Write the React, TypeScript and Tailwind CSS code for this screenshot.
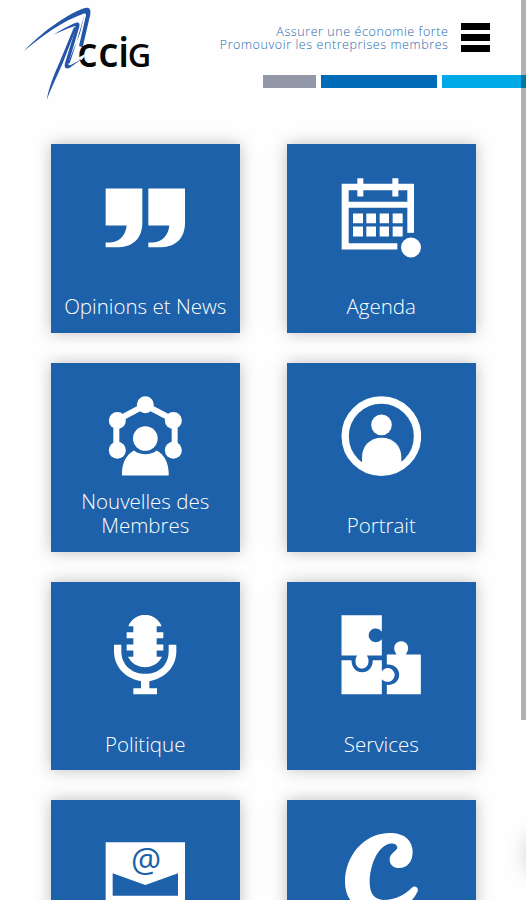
import type { ReactNode } from "react";

const BLUE = "#1c61a9";

function Logo() {
  return (
    <svg className="h-[110px] w-[160px]" viewBox="0 0 480 330" role="img" aria-label="CCIG">
      <g fill="#2356a8">
        <path d="M42 153C90 103 160 48 222 25C238 20 243 27 241 43L218 142L207 138L228 46C228 41 225 39 218 42C155 65 98 107 42 153Z" />
        <path d="M127 106C150 92 176 76 198 68C207 66 210 71 208 80L176 188C173 197 179 197 187 193L216 177L178 204C166 208 162 202 165 190L197 85C198 79 195 78 189 80C168 87 147 96 127 106Z" />
        <path d="M200 82L158 190C143 224 128 256 110 300C118 257 133 222 148 188L192 82Z" />
        <path d="M224 42L194 145L179 190L174 190L210 100Z" />
      </g>
      <text
        x="202 265 324 353"
        y="202"
        fill="#080808"
        fontFamily="'Open Sans', sans-serif"
        fontWeight="600"
        fontSize="122"
      >
        cci<tspan fontSize="97">G</tspan>
      </text>
      <path d="M203 174L233 158L214 181Z" fill="#fff" />
    </svg>
  );
}

function Icon({ viewBox, children }: { viewBox: string; children: ReactNode }) {
  return (
    <svg className="size-20 shrink-0" viewBox={viewBox} fill="#fff" aria-hidden="true">
      {children}
    </svg>
  );
}

const quotes = (
  <Icon viewBox="195 127.5 240 240">
    <path id="quote" d="M197 159H307V262C307 307 280 335 236 335H197V321H211C239 319 257 300 260 270H197Z" />
    <use href="#quote" x="128" />
  </Icon>
);

const calendar = (
  <Icon viewBox="183 127.5 240 240">
    <path fillRule="evenodd" d="M185 145H402V342H185ZM206 164V199H382V164ZM206 217V323H382V217Z" />
    <path fill={BLUE} d="M352 292H404V345H352Z" />
    <path d="M232 128H250V183H232ZM337 128H355V183H337Z" />
    <path d="M219 234H249V263H219ZM259 234H288V263H259ZM299 234H327V263H299ZM338 234H368V263H338ZM219 273H249V303H219ZM259 273H288V303H259ZM299 273H327V303H299ZM338 273H368V303H338Z" />
    <circle cx="393" cy="336" r="30" />
  </Icon>
);

const members = (
  <Icon viewBox="195 121.5 240 240">
    <path d="M229 284V195L316 149L404 195V284" fill="none" stroke="#fff" strokeWidth="18" />
    {[[232, 284], [232, 195], [316, 148], [400, 195], [400, 284]].map(([x, y]) => (
      <circle key={`${x}-${y}`} cx={x} cy={y} r="25.5" />
    ))}
    <circle cx="316" cy="249" r="37" />
    <path d="M246 360V351C247 321 259 298 282 285C300 300 332 300 350 285C373 298 385 321 386 351V360Z" />
  </Icon>
);

const portrait = (
  <Icon viewBox="184 121.5 240 240">
    <circle cx="305" cy="242" r="108.5" fill="none" stroke="#fff" strokeWidth="22" />
    <circle cx="305.5" cy="208" r="31" />
    <path d="M247 323V306C247 271 271 247 306 247C341 247 365 271 365 306V323C332 359 280 359 247 323Z" />
  </Icon>
);

const microphone = (
  <Icon viewBox="196 118.5 240 240">
    <path d="M266 152C276 130 294 118 316 118C338 118 356 130 366 152H351V170H371V188H351V207H371V225H351V244H367C357 264 338 275 316 275C294 275 275 264 265 244H281V225H261V207H281V188H261V170H281V152Z" />
    <path d="M223 208H245V227C245 268 276 295 317 295C358 295 387 268 387 227V208H410V229C409 275 376 309 329 317V338H352V356H281V338H304V317C257 309 224 275 223 229Z" />
  </Icon>
);

const puzzle = (
  <Icon viewBox="183.5 118.5 240 240">
    <path d="M185 119H306V169C299 157 283 156 275 163C264 172 264 187 274 195C283 203 298 201 306 191V240H261C265 247 266 250 266 257C266 270 257 279 246 279C235 279 227 270 227 257C227 250 228 247 232 240H185Z" />
    <path d="M185 254H215C215 276 229 290 247 290C265 290 279 276 279 254H306V287C317 275 329 276 337 283C347 292 347 305 337 314C329 321 316 321 306 311V356H185Z" />
    <path d="M321 237H350C347 230 343 226 343 219C343 206 352 197 364 197C376 197 385 206 385 219C385 226 381 230 378 237H423V356H321V328C343 330 358 317 358 298C358 279 343 265 321 267Z" />
  </Icon>
);

const mail = (
  <Icon viewBox="195 159 240 240">
    <path d="M197 187H435V399H197Z" />
    <path fill={BLUE} d="M218 280L316 315L414 280V347H218Z" />
    <text x="318" y="276" textAnchor="middle" fill={BLUE} fontFamily="'Open Sans', sans-serif" fontSize="101">@</text>
  </Icon>
);

const letterC = (
  <Icon viewBox="183 159 240 240">
    <path d="M326 159C370 157 398 180 398 216C398 244 382 264 358 264C340 264 329 253 329 239C329 218 353 212 352 202C351 192 335 187 320 194C290 207 269 259 269 307C269 341 284 359 310 360C346 360 374 345 397 322C407 315 418 325 412 336C393 375 353 399 297 398C236 397 195 365 195 306C195 229 250 161 326 159Z" />
  </Icon>
);

const tiles = [
  { label: "Opinions et News", icon: quotes },
  { label: "Agenda", icon: calendar },
  { label: "Nouvelles des Membres", icon: members },
  { label: "Portrait", icon: portrait },
  { label: "Politique", icon: microphone },
  { label: "Services", icon: puzzle },
  { label: "", icon: mail },
  { label: "", icon: letterC },
];

export default function App() {
  return (
    <div className="relative h-[900px] w-[526px] overflow-hidden bg-[#fefefe] font-['Open_Sans',sans-serif]">
      <header className="flex h-[144.4px] items-start pl-[10px]">
        <Logo />
        <div className="flex flex-1 flex-col">
          <div className="flex h-[52px] items-start justify-end pt-[23px] pr-[36px]">
            <p className="mr-[12.5px] text-right text-[12.5px] leading-[13px] font-light tracking-[0.58px] whitespace-nowrap text-[#286bb0]">
              <span className="block pt-[2px]">Assurer une économie forte</span>
              <span className="block">Promouvoir les entreprises membres</span>
            </p>
            <button className="flex w-[29px] flex-col gap-[4px]" aria-label="Menu">
              <span className="h-[7px] w-full bg-black" />
              <span className="h-[7px] w-full bg-black" />
              <span className="h-[7px] w-full bg-black" />
            </button>
          </div>
          <div className="mt-[23px] ml-auto flex h-[13px] w-[263px] gap-[5px]">
            <span className="w-[53px] bg-[#9298a8]" />
            <span className="w-[116px] bg-[#006cb8]" />
            <span className="flex-1 bg-[#00a9e8]" />
          </div>
        </div>
      </header>

      <main className="grid grid-cols-[188.5px_188.5px] gap-x-[47.5px] gap-y-[30px] pl-[51px]">
        {tiles.map(({ label, icon }, i) => (
          <a
            key={i}
            className="flex h-[188.6px] flex-col items-center bg-[#1c61a9] pt-[33.2px] shadow-[0_0_15px_rgba(0,0,0,0.25)]"
          >
            {icon}
            <span className="mt-auto mb-[14.5px] px-3 text-center text-[20.5px] leading-[24px] font-light text-white">
              {label}
            </span>
          </a>
        ))}
      </main>

      <div className="absolute top-0 right-0 h-[720px] w-[5px] bg-black/30" />
      <div className="absolute top-[834px] left-[528px] size-[40px] rounded-full shadow-[0_0_22px_rgba(0,0,0,0.25)]" />
    </div>
  );
}
